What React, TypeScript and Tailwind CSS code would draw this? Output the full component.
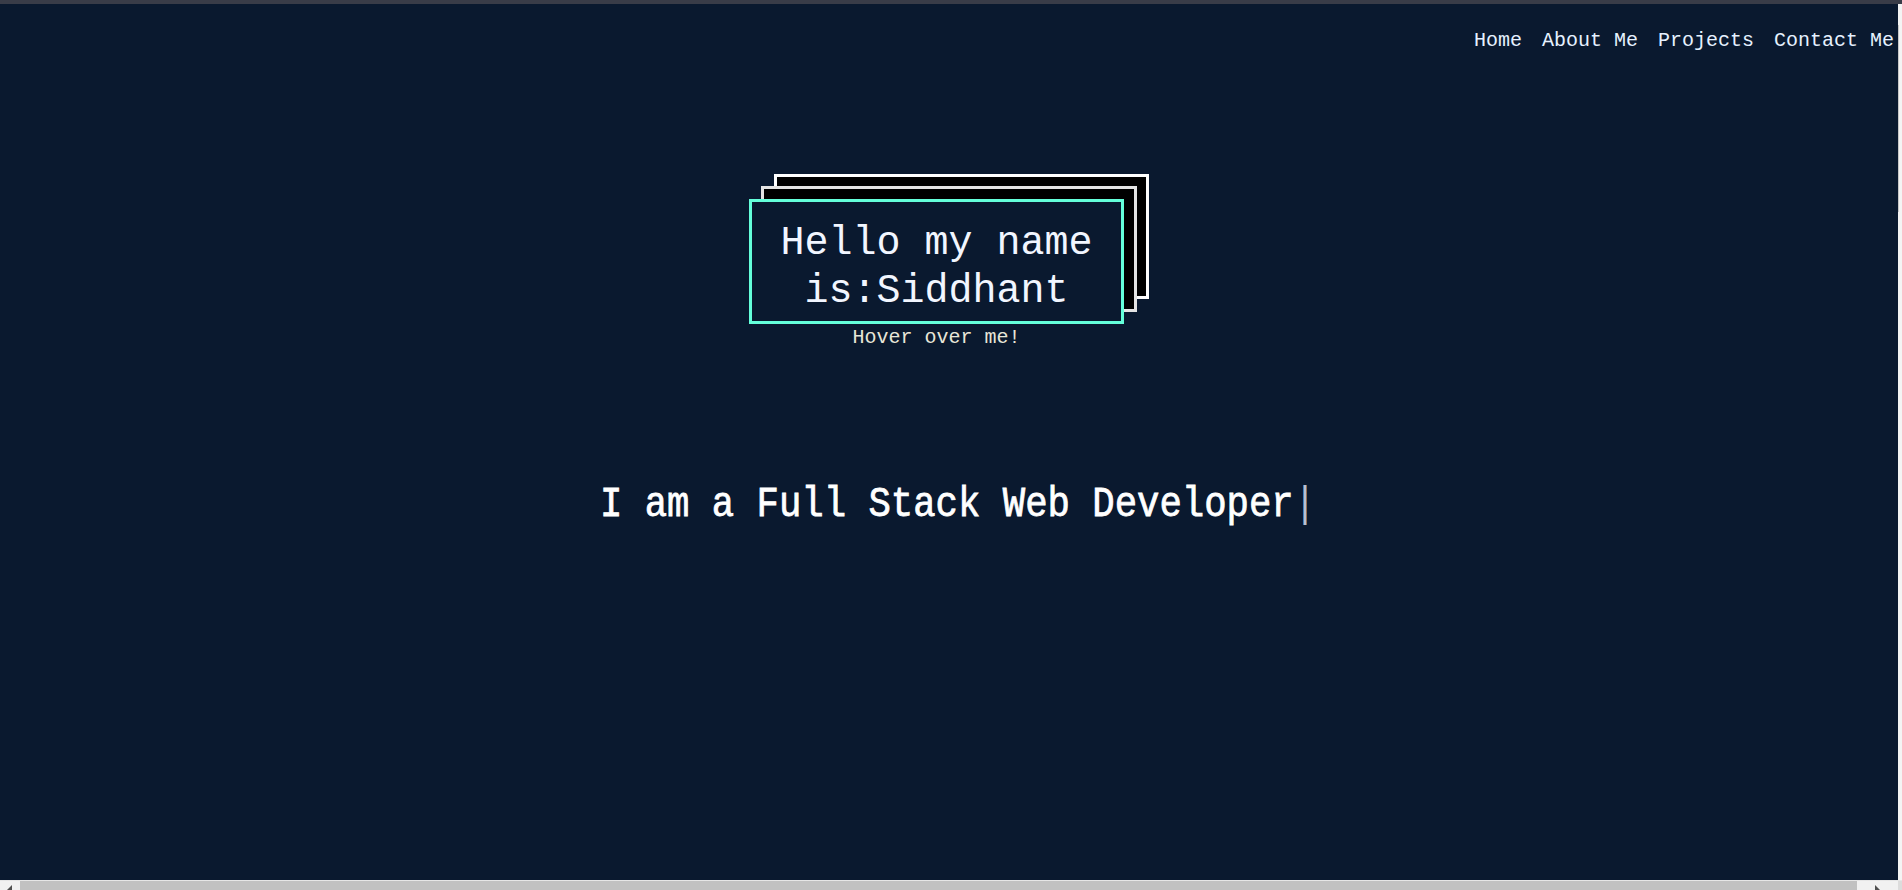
const NAV_LINKS = ["Home", "About Me", "Projects", "Contact Me"];

function Navbar() {
  return (
    <nav className="flex justify-end gap-[20px] pt-[23px] pr-[4px] text-[20px] leading-[28px] text-[#e6f1ff]">
      {NAV_LINKS.map((link) => (
        <a key={link} href="#" className="whitespace-nowrap">
          {link}
        </a>
      ))}
    </nav>
  );
}

function NameCard() {
  return (
    <div className="relative mx-auto mt-[119px] w-[400px] pt-[25px]">
      {/* stacked cards behind the main one */}
      <div className="absolute left-[25px] top-0 h-[125px] w-[375px] border-[3px] border-white bg-black" />
      <div className="absolute left-[12px] top-[12px] h-[126px] w-[376px] border-[3px] border-[#e4e4e4] bg-black" />
      <div className="relative h-[125px] w-[375px] border-[3px] border-[#64ffda] bg-[#0a192f] pt-[18px] text-center text-[40px] leading-[48px] text-[#f2f6ff]">
        Hello my name
        <br />
        is:Siddhant
      </div>
      <p className="w-[375px] text-center text-[20px] leading-[28px] text-[#e8e6d8]">
        Hover over me!
      </p>
    </div>
  );
}

function Scrollbars() {
  return (
    <div className="flex h-[10px] border-t border-[#e6e6e6] bg-[#f1f1f1]">
      <div className="flex w-[20px] items-end pl-[7px]">
        <div className="h-0 w-0 border-b-[5px] border-l-[5px] border-b-[#505050] border-l-transparent" />
      </div>
      <div className="flex-1 bg-[#c1c1c1]" />
      <div className="flex w-[41px] items-end justify-center">
        <div className="h-0 w-0 border-b-[5px] border-r-[5px] border-b-[#505050] border-r-transparent" />
      </div>
      <div className="w-[4px] bg-[#dcdcdc]" />
    </div>
  );
}

export default function App() {
  return (
    <div className="flex h-[890px] w-full flex-col overflow-hidden bg-[#0a192f] font-['Liberation_Mono',monospace]">
      <div className="h-[4px] bg-[#393c48]" />
      <div className="flex min-h-0 flex-1">
        <main className="flex-1">
          <Navbar />
          <NameCard />
          <h1 className="mt-[131px] pl-[18px] text-center text-[37.3px] leading-[45px] text-white [-webkit-text-stroke:0.7px_white]">
            <span className="inline-block scale-y-[1.14]">
              I am a Full Stack Web Developer
              <span className="text-[#b8bfd0] [-webkit-text-stroke:0px]">|</span>
            </span>
          </h1>
        </main>
        <div className="flex w-[4px] flex-col bg-[#f4f4f4]">
          <div className="mt-[21px] h-[187px] w-[1px] bg-[#c8c8c8]" />
        </div>
      </div>
      <Scrollbars />
    </div>
  );
}
